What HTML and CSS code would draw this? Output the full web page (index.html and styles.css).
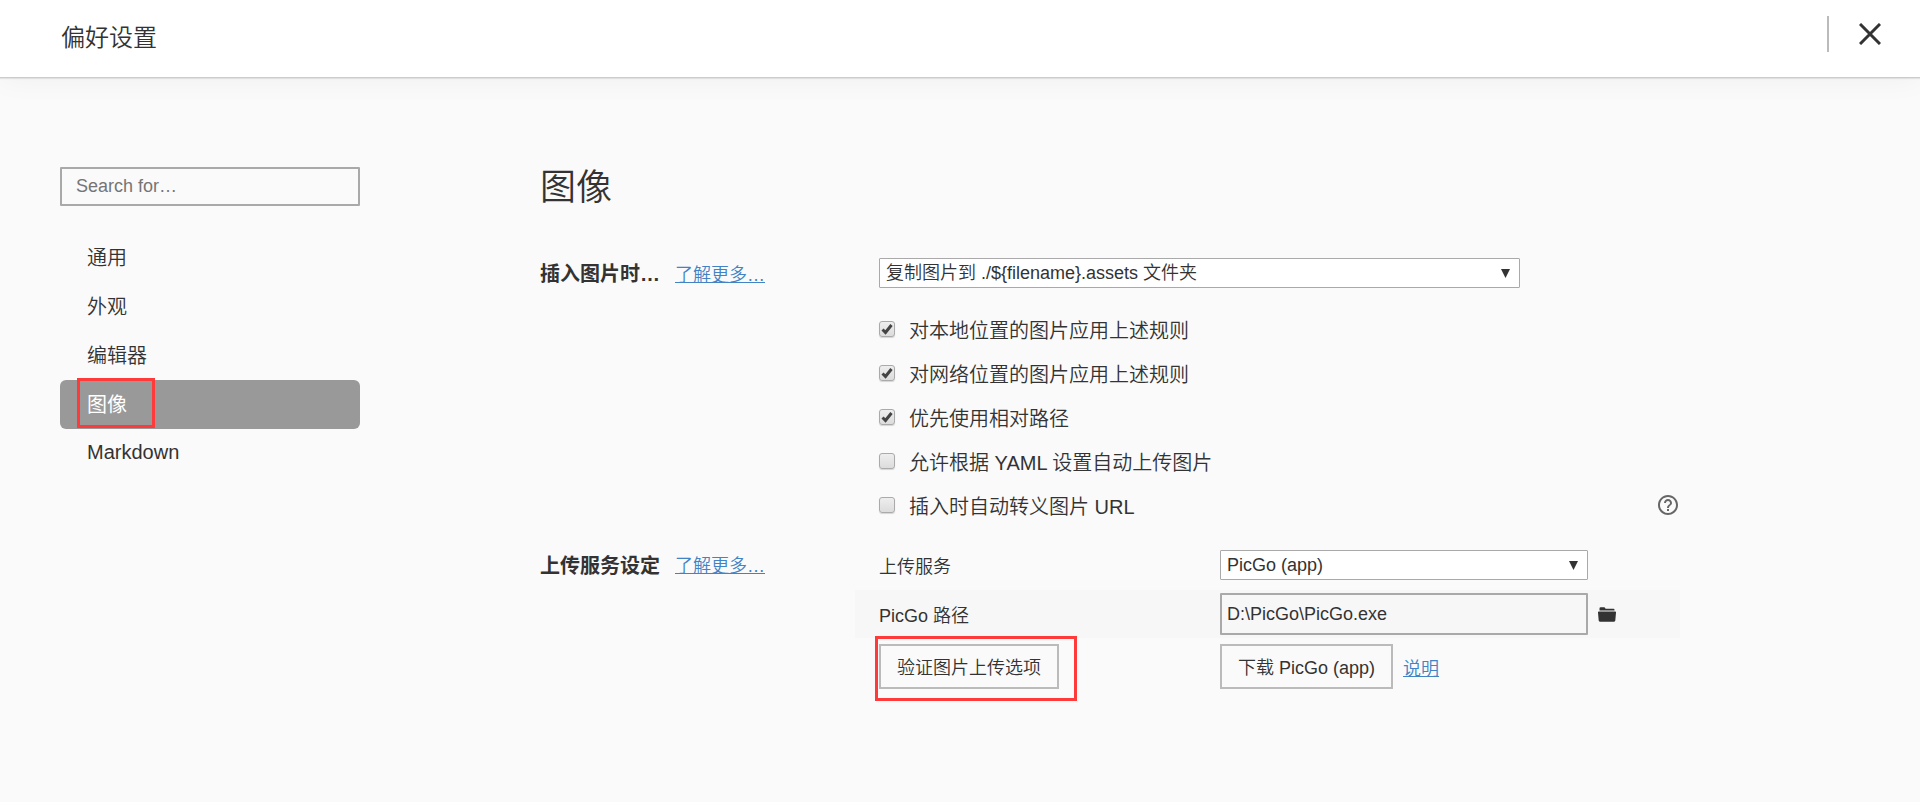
FILE: index.html
```html
<!doctype html>
<html lang="zh-CN">
  <head>
    <meta charset="UTF-8" />
    <title>偏好设置</title>
    <link rel="stylesheet" href="styles.css">
  </head>
  <body>
    <header class="header">
      <h1 class="header-title">偏好设置</h1>
      <div class="header-actions">
        <button type="button" class="close-btn" aria-label="关闭">
          <svg width="22" height="22" viewBox="0 0 22 22">
            <path d="M1 1L21 21M21 1L1 21" fill="none" stroke="#333" stroke-width="3" />
          </svg>
        </button>
      </div>
    </header>

    <div class="page">
      <aside class="sidebar">
        <input type="search" class="search-input" placeholder="Search for…" aria-label="Search" />
        <nav class="menu">
          <a href="#general" class="menu-item">通用</a>
          <a href="#appearance" class="menu-item">外观</a>
          <a href="#editor" class="menu-item">编辑器</a>
          <a href="#image" class="menu-item active">图像<span class="mark mark-menu"></span></a>
          <a href="#markdown" class="menu-item">Markdown</a>
        </nav>
      </aside>

      <main class="content">
        <h2 class="content-title">图像</h2>

        <section class="setting">
          <div class="setting-head">
            <label class="setting-name" for="insertAction">插入图片时…</label>
            <a href="#insert-help" class="link">了解更多…</a>
          </div>
          <div class="setting-body">
            <select class="select" id="insertAction">
              <option>复制图片到 ./${filename}.assets 文件夹</option>
            </select>
            <div class="checks">
              <label class="check-row"><input type="checkbox" class="checkbox" checked />对本地位置的图片应用上述规则</label>
              <label class="check-row"><input type="checkbox" class="checkbox" checked />对网络位置的图片应用上述规则</label>
              <label class="check-row"><input type="checkbox" class="checkbox" checked />优先使用相对路径</label>
              <label class="check-row"><input type="checkbox" class="checkbox" />允许根据 YAML 设置自动上传图片</label>
              <div class="check-line">
                <label class="check-row"><input type="checkbox" class="checkbox" />插入时自动转义图片 URL</label>
                <button type="button" class="icon-btn help-btn" aria-label="帮助">
                  <svg width="24" height="24" viewBox="0 0 24 24">
                    <path fill="#666" d="M11 18h2v-2h-2v2zm1-16C6.480 2 2 6.480 2 12s4.480 10 10 10 10-4.480 10-10S17.520 2 12 2zm0 18c-4.410 0-8-3.590-8-8s3.590-8 8-8 8 3.590 8 8-3.590 8-8 8zm0-14c-2.210 0-4 1.790-4 4h2c0-1.100.9-2 2-2s2 .9 2 2c0 2-3 1.750-3 5h2c0-2.250 3-2.500 3-5 0-2.210-1.790-4-4-4z" />
                  </svg>
                </button>
              </div>
            </div>
          </div>
        </section>

        <section class="setting">
          <div class="setting-head setting-head-upload">
            <span class="setting-name">上传服务设定</span>
            <a href="#upload-help" class="link">了解更多…</a>
          </div>
          <div class="upload">
            <div class="upload-row">
              <label for="uploadService">上传服务</label>
              <div class="upload-field">
                <select class="select" id="uploadService">
                  <option>PicGo (app)</option>
                </select>
              </div>
            </div>
            <div class="upload-row striped">
              <label for="picgoPath">PicGo 路径</label>
              <div class="upload-field">
                <input type="text" class="path-input" id="picgoPath" value="D:\PicGo\PicGo.exe" />
                <button type="button" class="icon-btn" aria-label="选择文件">
                  <svg width="18" height="15" viewBox="0 0 18 15">
                    <path fill="#333" d="M1.500 3.500V1.500Q1.500.3 2.700.3H6Q7 .3 7.300 1.200L7.500 1.700H15.500Q16.500 1.700 16.500 2.700V3.500ZM.8 4.500H17.200Q18.100 4.500 18 5.400L17.300 13.600Q17.200 14.700 16.100 14.700H1.900Q.8 14.700.7 13.600L0 5.400Q-.1 4.500.8 4.500Z" />
                  </svg>
                </button>
              </div>
            </div>
            <div class="upload-row upload-buttons">
              <div class="verify">
                <button type="button" class="btn">验证图片上传选项</button>
                <span class="mark mark-verify"></span>
              </div>
              <div class="upload-field">
                <button type="button" class="btn">下载 PicGo (app)</button>
                <a href="#picgo-help" class="link">说明</a>
              </div>
            </div>
          </div>
        </section>
      </main>
    </div>
  </body>
</html>
```
FILE: styles.css
```css
* {
  box-sizing: border-box;
}

body {
  margin: 0;
  min-height: 100vh;
  background: #fafafa;
  color: #333;
  font-family: "Liberation Sans", "Noto Sans CJK SC", sans-serif;
  font-size: 18px;
  font-weight: 350;
}

input,
select,
button {
  font: inherit;
  color: inherit;
}

button {
  cursor: pointer;
}

.header {
  display: flex;
  align-items: center;
  justify-content: space-between;
  height: 78px;
  padding: 0 39px 10px 61px;
  background: #fff;
  border-bottom: 1px solid #ccc;
  box-shadow: 0 1px 1px rgba(0, 0, 0, 0.08), 0 0 30px rgba(0, 0, 0, 0.05);
}

.header-title {
  margin: 4px 0 0;
  font-size: 24px;
  font-weight: 350;
}

.header-actions {
  padding-left: 30px;
  border-left: 2px solid #bbb;
}

.close-btn {
  display: flex;
  align-items: center;
  height: 36px;
  padding: 0;
  border: none;
  background: none;
}

.page {
  display: grid;
  grid-template-columns: 300px 1fr;
  gap: 180px;
  padding: 89px 240px 60px 60px;
}

.search-input {
  display: block;
  width: 100%;
  height: 39px;
  padding: 0 14px;
  border: 2px solid #a9a9a9;
  border-radius: 1px;
  background: transparent;
  appearance: none;
}

.search-input::placeholder {
  color: #757575;
}

/* sidebar menu */
.menu {
  margin-top: 27px;
}

.menu-item {
  display: flex;
  align-items: center;
  position: relative;
  height: 49px;
  padding: 0 0 2px 27px;
  border-radius: 6px;
  color: #333;
  font-size: 20px;
  text-decoration: none;
}

.menu-item.active {
  background: #999;
  color: #fff;
  font-weight: 400;
}

/* red frames */
.mark {
  position: absolute;
  border: 3px solid #ff3a3a;
  pointer-events: none;
}

.mark-menu {
  top: -2px;
  left: 17px;
  width: 78px;
  height: 50px;
}

.mark-verify {
  top: -8px;
  left: -4px;
  right: -18px;
  bottom: -12px;
}

.content-title {
  margin: 0 0 50px;
  padding-top: 1px;
  font-size: 36px;
  font-weight: 350;
  line-height: 40px;
}

.setting {
  display: grid;
  grid-template-columns: 339px 1fr;
}

.setting-head {
  display: flex;
  align-items: center;
  gap: 15px;
  height: 29px;
}

.setting-head-upload {
  height: 44px;
}

.setting-name {
  font-size: 20px;
  font-weight: 700;
}

.link {
  color: #4183c4;
  text-decoration: underline;
}

.select {
  display: block;
  width: 80%;
  height: 30px;
  padding: 0 30px 0 6px;
  border: 1px solid #a9a9a9;
  border-radius: 1px;
  appearance: none;
  background: #fff url("data:image/svg+xml,%3Csvg xmlns='http://www.w3.org/2000/svg' width='9' height='9'%3E%3Cpath d='M0 0h9L4.500 9z' fill='%23333'/%3E%3C/svg%3E") no-repeat right 9px center;
}

.checks {
  margin: 19px 0 15px;
}

.check-row {
  display: flex;
  align-items: center;
  gap: 14px;
  height: 44px;
  font-size: 20px;
}

.check-line {
  display: flex;
  align-items: center;
  justify-content: space-between;
}

.checkbox {
  width: 16px;
  height: 16px;
  margin: 0;
  border: 1px solid #aaa;
  border-radius: 3px;
  appearance: none;
  background: linear-gradient(#eee, #dcdcdc);
  box-shadow: 0 1px 1px rgba(0, 0, 0, 0.15);
}

.checkbox:checked {
  background: url("data:image/svg+xml,%3Csvg xmlns='http://www.w3.org/2000/svg' width='14' height='14'%3E%3Cpath d='M2.500 7.500L5.500 10.500L11.500 3' fill='none' stroke='%23444' stroke-width='3'/%3E%3C/svg%3E") no-repeat center, linear-gradient(#eee, #dcdcdc);
}

.icon-btn {
  display: flex;
  padding: 0;
  border: none;
  background: none;
}

/* upload service */
.upload {
  margin-left: -24px;
}

.upload-row {
  display: grid;
  grid-template-columns: 341px 1fr;
  align-items: center;
  height: 48px;
  padding: 0 0 2px 24px;
}

.striped {
  padding-bottom: 0;
  background: #f7f7f7;
}

.upload-field {
  display: flex;
  align-items: center;
  gap: 10px;
}

.path-input {
  width: 80%;
  height: 42px;
  padding: 0 5px;
  border: 2px solid #a9a9a9;
  border-radius: 1px;
  background: transparent;
}

.upload-buttons {
  height: auto;
  padding-top: 6px;
}

.verify {
  position: relative;
  justify-self: start;
}

.btn {
  display: block;
  height: 45px;
  padding: 0 16px 2px;
  border: 2px solid #bbb;
  background: transparent;
}
```
